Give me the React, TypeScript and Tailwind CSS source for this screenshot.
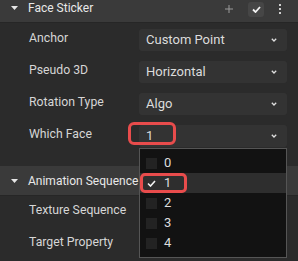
import React from "react";

const Caret = () => (
  <svg width="7" height="4" viewBox="0 0 7 4" className="shrink-0">
    <path d="M0 0 L7 0 L3.5 4 Z" fill="#e6e6e6" />
  </svg>
);

const Chevron = () => (
  <svg width="6" height="4" viewBox="0 0 6 4" className="shrink-0">
    <path d="M0.8 0.8 L3 3 L5.2 0.8" stroke="#e0e0e0" strokeWidth="1.3" fill="none" />
  </svg>
);

const SectionHeader = ({ title, children }: { title: string; children?: React.ReactNode }) => (
  <div className="h-[30px] bg-[#3a3a3a] flex items-center pl-[11px] pr-[17px] border-b border-[#262626]">
    <Caret />
    <span className="ml-[10px] text-[12px] text-[#e8e8e8] whitespace-nowrap">{title}</span>
    <div className="flex-1" />
    {children}
  </div>
);

const Row = ({ label, value, children }: { label: string; value?: string; children?: React.ReactNode }) => (
  <div className="flex items-center h-[22px]">
    <span className="w-[110px] shrink-0 whitespace-nowrap text-[12.25px] text-[#d6d6d6] -mt-[3px]">{label}</span>
    {value !== undefined && (
      <div className="relative flex-1 h-[22px] bg-[#333333] rounded-[3px] flex items-center pl-[7px] pr-[10px]">
        <span className="text-[13px] text-[#dcdcdc] flex-1">{value}</span>
        <Chevron />
        {children}
      </div>
    )}
  </div>
);

const options = ["0", "1", "2", "3", "4"];

export default function App() {
  return (
    <div
      className="relative w-[298px] h-[261px] overflow-hidden bg-[#2b2b2b]"
      style={{ fontFamily: "Roboto, 'Noto Sans', sans-serif" }}
    >
      <div className="-mt-[7px]">
        <SectionHeader title="Face Sticker">
          <svg width="8" height="8" viewBox="0 0 8 8" className="mt-[3px]">
            <path d="M4 0 V8 M0 4 H8" stroke="#9a9a9a" strokeWidth="1" />
          </svg>
          <div className="ml-[15px] mt-[3px] w-[16px] h-[15px] rounded-[3px] bg-[#464646] flex items-center justify-center">
            <svg width="9" height="7" viewBox="0 0 9 7">
              <path d="M1 3.5 L3.5 6 L8 1" stroke="#f2f2f2" strokeWidth="1.8" fill="none" />
            </svg>
          </div>
          <div className="ml-[15px] mt-[3px] flex flex-col gap-[2px]">
            <div className="w-[2px] h-[2px] bg-[#cfcfcf]" />
            <div className="w-[2px] h-[2px] bg-[#cfcfcf]" />
            <div className="w-[2px] h-[2px] bg-[#cfcfcf]" />
          </div>
        </SectionHeader>
      </div>

      <div className="pt-[6px] pl-[29px] pr-[11px] flex flex-col gap-[10px]">
        <Row label="Anchor" value="Custom Point" />
        <Row label="Pseudo 3D" value="Horizontal" />
        <Row label="Rotation Type" value="Algo" />
        <Row label="Which Face" value="1">
          <div className="absolute -left-[11px] -top-[3px] w-[48px] h-[23px] rounded-[6px] border-[3px] border-[#e84c4c]" />
        </Row>
      </div>

      <div className="mt-[19px]">
        <SectionHeader title="Animation Sequence" />
      </div>

      <div className="pt-[5px] pl-[29px] pr-[11px] flex flex-col gap-[10px]">
        <Row label="Texture Sequence" />
        <Row label="Target Property" />
      </div>

      <div className="absolute left-[139px] top-[148px] w-[148px] h-[110px] bg-[#121212] border border-[#555555] pt-[4px]">
        {options.map((o) => {
          const selected = o === "1";
          return (
            <div
              key={o}
              className={`relative h-[20px] flex items-center pl-[6px] ${selected ? "bg-[#2e2e2e]" : ""}`}
            >
              {selected ? (
                <div className="w-[11px] h-[11px] flex items-center justify-center">
                  <svg width="9" height="7" viewBox="0 0 9 7">
                    <path d="M1 3.5 L3.5 6 L8 1" stroke="#f2f2f2" strokeWidth="1.6" fill="none" />
                  </svg>
                </div>
              ) : (
                <div className="w-[11px] h-[11px] bg-[#232323]" />
              )}
              <span className="ml-[7px] text-[13px] text-[#dedede]">{o}</span>
              {selected && (
                <div className="absolute left-0 top-0 w-[47px] h-[20px] rounded-[5px] border-[3px] border-[#e84c4c]" />
              )}
            </div>
          );
        })}
      </div>
    </div>
  );
}
